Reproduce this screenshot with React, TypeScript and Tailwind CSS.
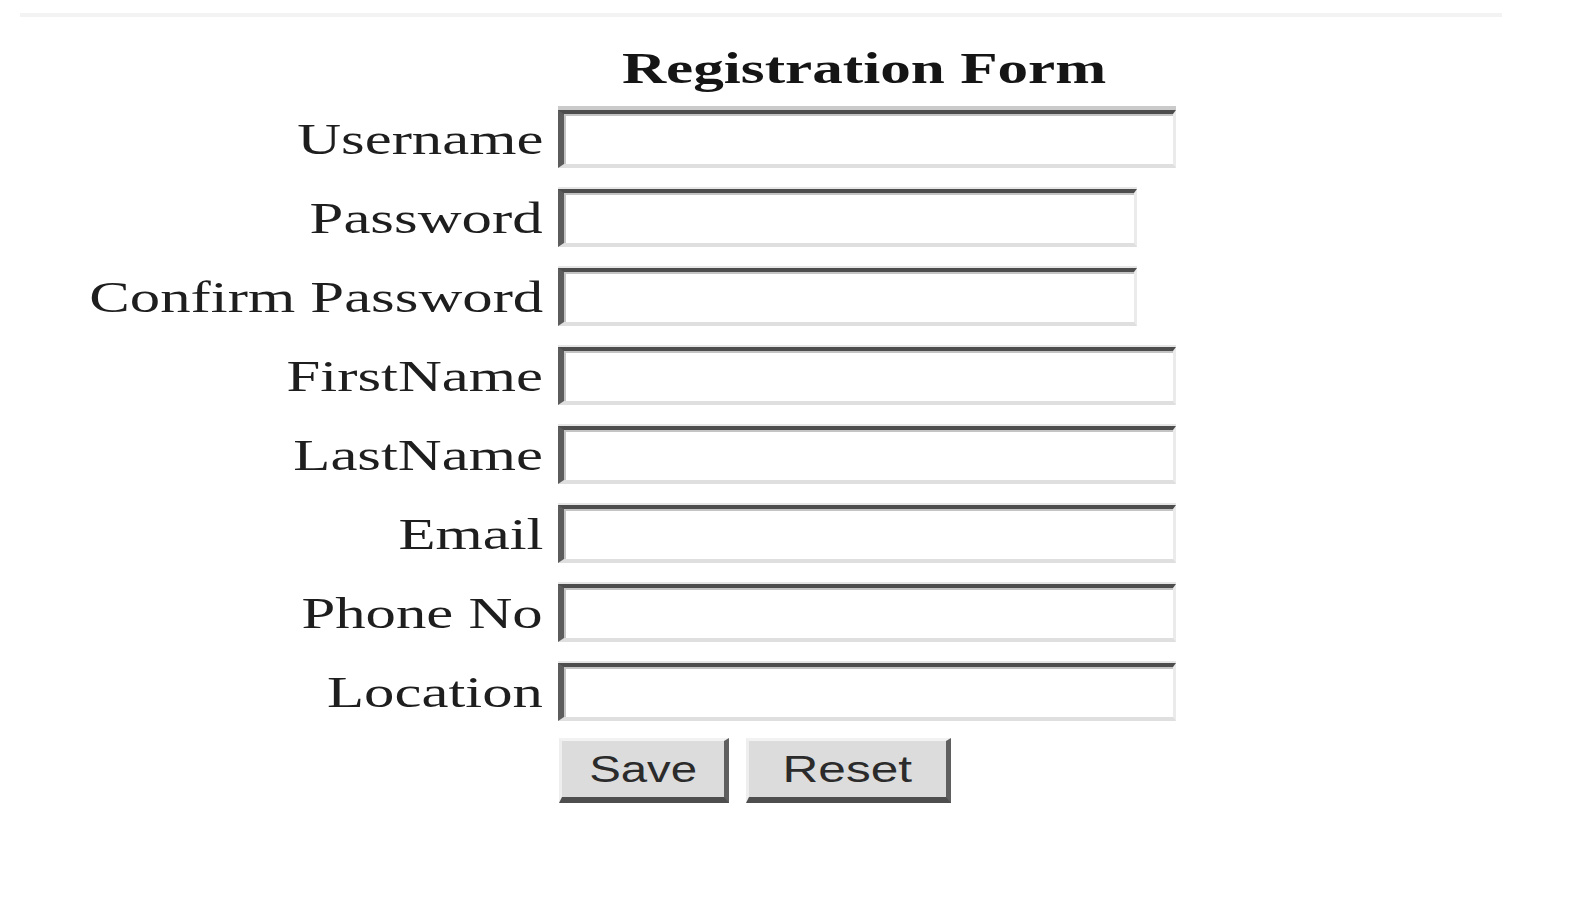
import React from "react";

type Field = {
    label: string;
    type: string;
    width: string;
    extra?: string;
};

const fields: Field[] = [
    { label: "Username", type: "text", width: "w-[618px]", extra: "shadow-[0_-4px_0_#cacaca,inset_2px_2px_0_#c4c4c4]" },
    { label: "Password", type: "password", width: "w-[579px]" },
    { label: "Confirm Password", type: "password", width: "w-[579px]" },
    { label: "FirstName", type: "text", width: "w-[618px]" },
    { label: "LastName", type: "text", width: "w-[618px]" },
    { label: "Email", type: "email", width: "w-[618px]" },
    { label: "Phone No", type: "tel", width: "w-[618px]" },
    { label: "Location", type: "text", width: "w-[618px]" },
];

const serif = "font-['Liberation_Serif','Times_New_Roman',serif]";
const sans = "font-['Liberation_Sans',Arial,sans-serif]";

const App = () => {
    return (
        <div className={`min-h-[900px] w-[1580px] bg-white ${serif}`}>
            {/* faint strip along the top */}
            <div className="pt-[13px] px-[20px] w-[1522px]">
                <div className="h-[4px] bg-[#f3f3f3]"></div>
            </div>

            <div className="mt-[25px] grid grid-cols-[543px_auto] gap-x-[15px]">
                <div></div>
                <div className="w-[612px] h-[52px] text-center leading-[52px]">
                    <span className="inline-block scale-x-[1.36] text-[45px] font-bold text-[#151515]">
                        Registration Form
                    </span>
                </div>
            </div>

            <form className="mt-[16px] grid grid-cols-[543px_auto] gap-x-[15px] gap-y-[21px]">
                {fields.map((field) => (
                    <React.Fragment key={field.label}>
                        <div className="h-[58px] flex items-center justify-end">
                            <span className="inline-block origin-right scale-x-[1.35] text-[45px] leading-[45px] whitespace-nowrap text-[#1e1e1e]">
                                {field.label}
                            </span>
                        </div>
                        <input
                            type={field.type}
                            className={`${field.width} h-[58px] bg-white border-solid border-t-[4px] border-l-[6px] border-r-[3px] border-b-[4px] border-t-[#4d4d4d] border-l-[#5c5c5c] border-r-[#ebebeb] border-b-[#dfdfdf] outline-none ${field.extra ?? "shadow-[0_-2px_0_#e6e6e6,inset_2px_2px_0_#c4c4c4]"}`}
                        />
                    </React.Fragment>
                ))}
            </form>

            <div className={`mt-[17px] pl-[559px] flex gap-[17px] ${sans}`}>
                <button
                    type="button"
                    className="w-[170px] h-[65px] bg-[#dcdcdc] border-solid border-t-[3px] border-l-[3px] border-r-[5px] border-b-[6px] border-t-[#f2f2f2] border-l-[#eeeeee] border-r-[#5f5f5f] border-b-[#4e4e4e] flex items-center justify-center"
                >
                    <span className="inline-block scale-x-[1.28] text-[37px] leading-none text-[#2b2b2b]">Save</span>
                </button>
                <button
                    type="button"
                    className="w-[205px] h-[65px] bg-[#dcdcdc] border-solid border-t-[3px] border-l-[3px] border-r-[5px] border-b-[6px] border-t-[#f2f2f2] border-l-[#eeeeee] border-r-[#5f5f5f] border-b-[#4e4e4e] flex items-center justify-center"
                >
                    <span className="inline-block scale-x-[1.34] text-[37px] leading-none text-[#2b2b2b]">Reset</span>
                </button>
            </div>
        </div>
    );
};

export default App;
